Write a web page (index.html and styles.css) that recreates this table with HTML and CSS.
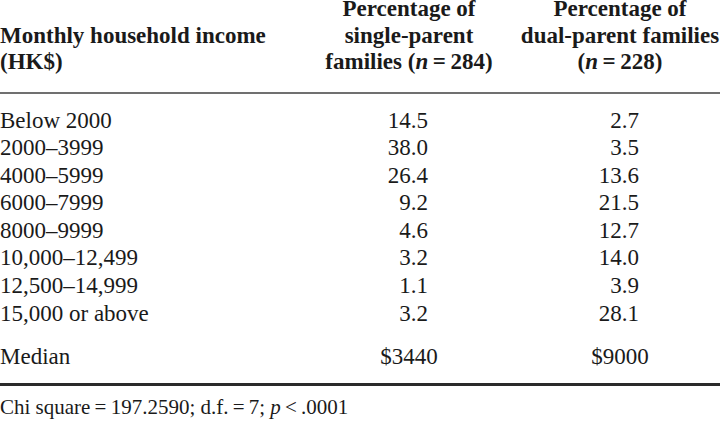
FILE: index.html
```html
<!DOCTYPE html>
<html>
<head>
<meta charset="utf-8">
<link rel="stylesheet" href="styles.css">
</head>
<body>
<div class="page">
  <div class="table">
    <div class="head">
      <div class="h h1">Monthly household income<br>(HK$)</div>
      <div class="h h2">Percentage of<br>single-parent<br>families (<i>n</i>&#8201;=&#8201;284)</div>
      <div class="h h3">Percentage of<br>dual-parent families<br>(<i>n</i>&#8201;=&#8201;228)</div>
    </div>
    <div class="body">
      <div class="row"><span class="c1">Below 2000</span><span class="c2">14.5</span><span class="c3">2.7</span></div>
      <div class="row"><span class="c1">2000–3999</span><span class="c2">38.0</span><span class="c3">3.5</span></div>
      <div class="row"><span class="c1">4000–5999</span><span class="c2">26.4</span><span class="c3">13.6</span></div>
      <div class="row"><span class="c1">6000–7999</span><span class="c2">9.2</span><span class="c3">21.5</span></div>
      <div class="row"><span class="c1">8000–9999</span><span class="c2">4.6</span><span class="c3">12.7</span></div>
      <div class="row"><span class="c1">10,000–12,499</span><span class="c2">3.2</span><span class="c3">14.0</span></div>
      <div class="row"><span class="c1">12,500–14,999</span><span class="c2">1.1</span><span class="c3">3.9</span></div>
      <div class="row"><span class="c1">15,000 or above</span><span class="c2">3.2</span><span class="c3">28.1</span></div>
      <div class="row median"><span class="c1">Median</span><span class="c2">$3440</span><span class="c3">$9000</span></div>
    </div>
    <div class="foot">Chi square&#8201;=&#8201;197.2590; d.f.&#8201;=&#8201;7; <i>p</i>&#8201;&lt;&#8201;.0001</div>
  </div>
</div>
</body>
</html>
```
FILE: styles.css
```css
html, body {
  margin: 0;
  padding: 0;
  background: #fff;
  overflow: hidden;
}
.page {
  width: 720px;
  height: 421px;
  overflow: hidden;
}
.table {
  width: 732px;
  margin-top: -4px;
  font-family: "Liberation Serif", "Times New Roman", serif;
  color: #1a1a1a;
}
.head {
  display: grid;
  grid-template-columns: 310px 198px 224px;
  align-items: end;
  font-weight: bold;
  font-size: 23px;
  line-height: 26.5px;
  padding-bottom: 16.5px;
  border-bottom: 2px solid #707070;
}
.h1 { text-align: left; }
.h2, .h3 { text-align: center; }
.body {
  padding-top: 12.5px;
  padding-bottom: 12px;
  border-bottom: 3px solid #2a2a2a;
  font-size: 23px;
  line-height: 27.6px;
}
.row {
  display: grid;
  grid-template-columns: 310px 198px 224px;
}
.c2 { text-align: right; padding-right: 80px; }
.c3 { text-align: right; padding-right: 93px; }
.median { margin-top: 16px; }
.median .c2, .median .c3 { text-align: center; padding-right: 0; }
.foot {
  margin-top: 10.5px;
  font-size: 21px;
  line-height: 23px;
}
```
